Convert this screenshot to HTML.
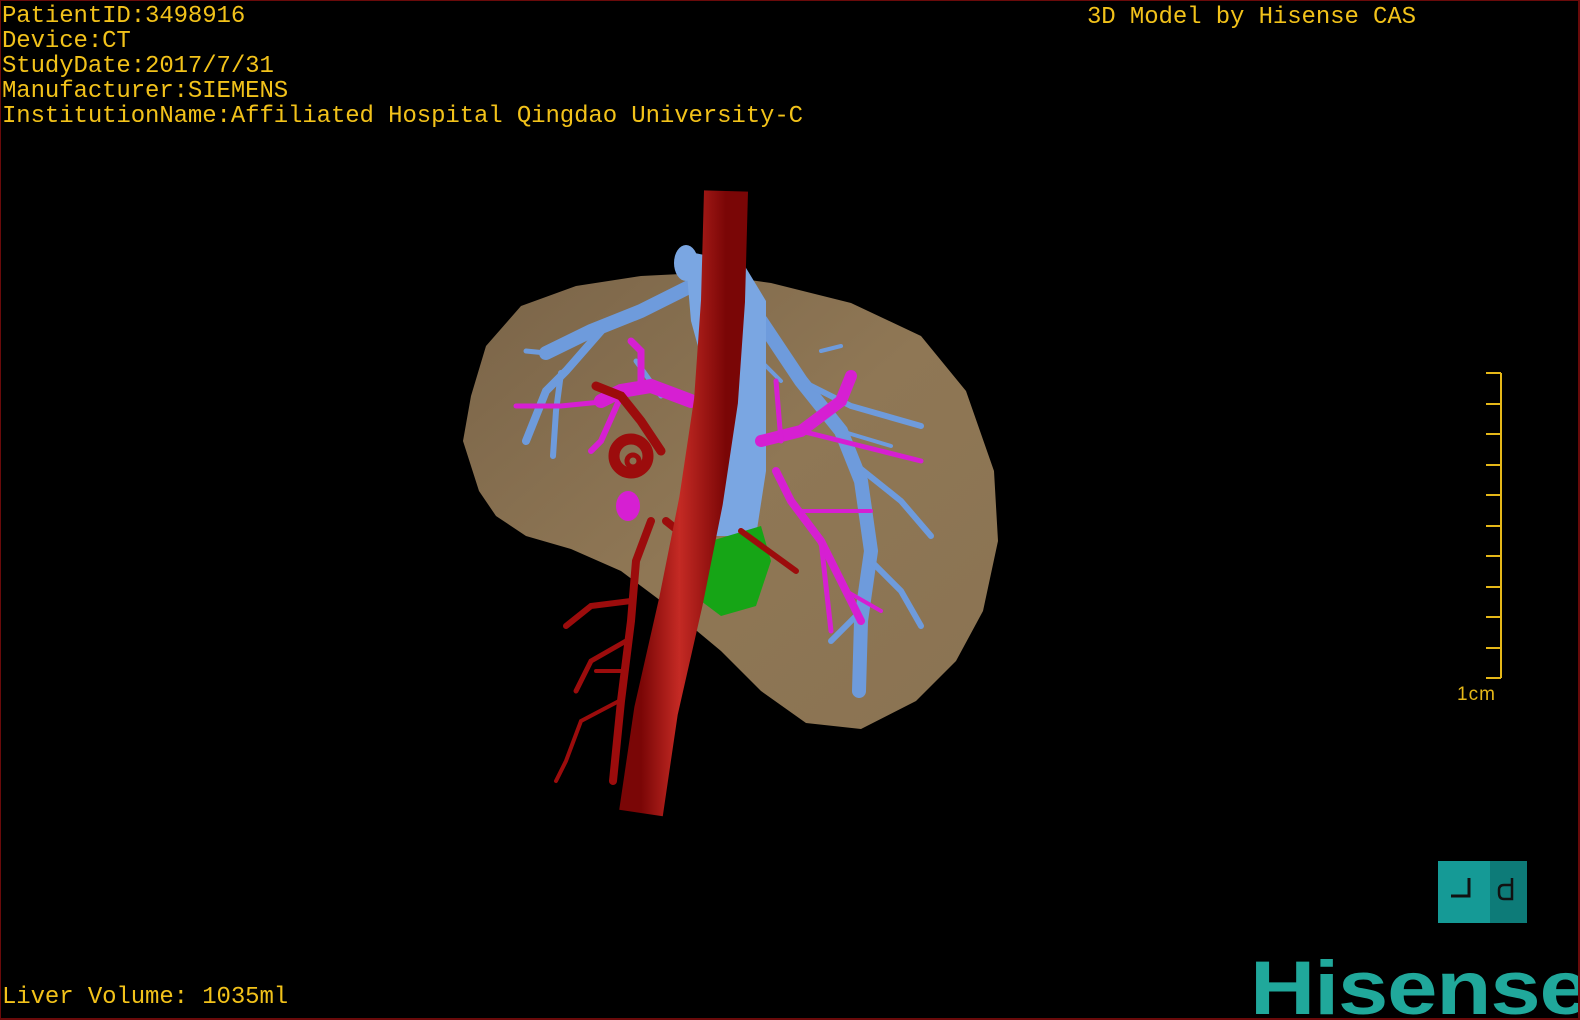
<!DOCTYPE html>
<html><head><meta charset="utf-8"><style>
html,body{margin:0;padding:0;background:#000;}
#f{position:relative;width:1580px;height:1020px;background:#000;overflow:hidden;box-sizing:border-box;border:1px solid #6a0a0a;border-width:1px 2px 2px 1px;}
.t{position:absolute;font-family:"Liberation Mono",monospace;font-size:24px;color:#f2c21a;line-height:25px;white-space:pre;letter-spacing:-0.1px;}
#logo{position:absolute;left:1249px;top:950px;font-family:"Liberation Sans",sans-serif;font-weight:bold;font-size:76px;color:#20a89b;transform:scaleX(1.19);transform-origin:left top;letter-spacing:-1px;line-height:76px;}
</style></head><body><div id="f">
<div class="t" style="left:1px;top:3px">PatientID:3498916
Device:CT
StudyDate:2017/7/31
Manufacturer:SIEMENS
InstitutionName:Affiliated Hospital Qingdao University-C</div>
<div class="t" style="left:1086px;top:4px">3D Model by Hisense CAS</div>
<div class="t" style="left:1px;top:984px">Liver Volume: 1035ml</div>
<svg width="1580" height="1020" style="position:absolute;left:0;top:0">
<defs>
<linearGradient id="lv" x1="0" y1="0" x2="1" y2="1"><stop offset="0" stop-color="#7a6448"/><stop offset="0.5" stop-color="#8f7755"/><stop offset="1" stop-color="#8a7352"/></linearGradient>
<linearGradient id="ao" x1="0" y1="0" x2="1" y2="0"><stop offset="0" stop-color="#7a0606"/><stop offset="0.45" stop-color="#c42a24"/><stop offset="1" stop-color="#7a0606"/></linearGradient>
</defs>
<path d="M462,440 L470,395 L485,345 L520,305 L575,285 L640,275 L700,272 L770,282 L850,302 L920,335 L965,390 L993,470 L997,540 L982,610 L955,660 L915,700 L860,728 L805,722 L760,690 L720,650 L690,625 L660,600 L620,570 L570,548 L525,535 L495,515 L478,490 L470,465 Z" fill="url(#lv)"/>
<g fill="none" stroke-linecap="round">
<g stroke="#6e9bdc">
<path d="M690,285 L640,310 L590,330 L545,352" stroke-width="14"/>
<path d="M600,330 L565,370 L545,390 L525,440" stroke-width="8"/>
<path d="M560,372 L555,410 L552,455" stroke-width="6"/>
<path d="M545,352 L525,350" stroke-width="5"/>
<path d="M760,320 L800,380 L840,430 L860,480 L870,550 L860,620 L858,690" stroke-width="14"/>
<path d="M800,380 L850,405 L920,425" stroke-width="6"/>
<path d="M820,350 L840,345" stroke-width="4"/>
<path d="M850,460 L900,500 L930,535" stroke-width="6"/>
<path d="M870,560 L900,590 L920,625" stroke-width="6"/>
<path d="M860,610 L830,640" stroke-width="6"/>
<path d="M840,430 L890,445" stroke-width="4"/>
<path d="M780,380 L760,360" stroke-width="4"/>
<path d="M635,360 L660,395" stroke-width="5"/>
</g>
<path d="M684,250 L742,262 L765,300 L765,470 L755,535 L712,535 L712,400 L690,320 Z" fill="#7aa6e2" stroke="none"/>
<ellipse cx="685" cy="262" rx="12" ry="18" fill="#7aa6e2"/>
<g stroke="#d61fd2">
<path d="M690,400 L650,385 L620,390 L600,400" stroke-width="14"/>
<path d="M640,385 L640,350 L630,340" stroke-width="7"/>
<path d="M610,400 L560,405 L515,405" stroke-width="5"/>
<path d="M620,395 L600,440 L590,450" stroke-width="6"/>
<path d="M760,440 L800,430 L840,400 L850,375" stroke-width="12"/>
<path d="M800,430 L880,450 L920,460" stroke-width="5"/>
<path d="M775,470 L790,500 L820,540 L845,590 L860,620" stroke-width="8"/>
<path d="M820,540 L830,630" stroke-width="5"/>
<path d="M800,510 L870,510" stroke-width="4"/>
<path d="M845,590 L880,610" stroke-width="4"/>
<path d="M775,380 L780,440" stroke-width="5"/>
</g>
<ellipse cx="627" cy="505" rx="12" ry="15" fill="#d61fd2" stroke="none"/>
<path d="M710,540 L760,525 L770,560 L755,605 L720,615 L700,600 L705,560 Z" fill="#16a516" stroke="none"/>
<g stroke="#9c0c0c">
<path d="M650,520 L635,560 L630,620 L620,700 L612,780" stroke-width="8"/>
<path d="M630,600 L590,605 L565,625" stroke-width="6"/>
<path d="M625,640 L590,660 L575,690" stroke-width="5"/>
<path d="M618,700 L580,720 L565,760 L555,780" stroke-width="4"/>
<path d="M620,670 L595,670" stroke-width="4"/>
<path d="M665,520 L690,540" stroke-width="8"/>
<path d="M740,530 L795,570" stroke-width="6"/>
<path d="M660,450 L640,420 L620,395 L595,385" stroke-width="9"/>
<circle cx="630" cy="455" r="17" stroke-width="11"/>
<circle cx="632" cy="460" r="6" stroke-width="5"/>
</g>
<path d="M725,190 L722,300 L715,400 L700,500 L680,600 L655,710 L640,812" stroke="url(#ao)" stroke-width="44" stroke-linecap="butt"/>
</g>
<g stroke="#e6b818" stroke-width="2">
<line x1="1500" y1="372" x2="1500" y2="677"/>
<line x1="1485" y1="372" x2="1500" y2="372"/>
<line x1="1485" y1="403" x2="1500" y2="403"/>
<line x1="1485" y1="433" x2="1500" y2="433"/>
<line x1="1485" y1="464" x2="1500" y2="464"/>
<line x1="1485" y1="494" x2="1500" y2="494"/>
<line x1="1485" y1="525" x2="1500" y2="525"/>
<line x1="1485" y1="555" x2="1500" y2="555"/>
<line x1="1485" y1="586" x2="1500" y2="586"/>
<line x1="1485" y1="616" x2="1500" y2="616"/>
<line x1="1485" y1="647" x2="1500" y2="647"/>
<line x1="1485" y1="677" x2="1500" y2="677"/>
</g>
<text x="1456" y="699" font-family="Liberation Sans,sans-serif" font-size="19" fill="#e6b818" letter-spacing="1">1cm</text>
<rect x="1437" y="860" width="52" height="62" fill="#159a96"/>
<rect x="1489" y="860" width="37" height="62" fill="#0d7b78"/>
<path d="M1450,895 L1468,895 L1468,877" stroke="#111" stroke-width="3" fill="none"/>
<path d="M1511,877 L1511,898 L1503,898 Q1498,898 1498,892 L1498,889 Q1498,884 1503,884 L1511,884" stroke="#111" stroke-width="2.5" fill="none"/>
</svg>
<div id="logo">Hisense</div>
</div></body></html>
